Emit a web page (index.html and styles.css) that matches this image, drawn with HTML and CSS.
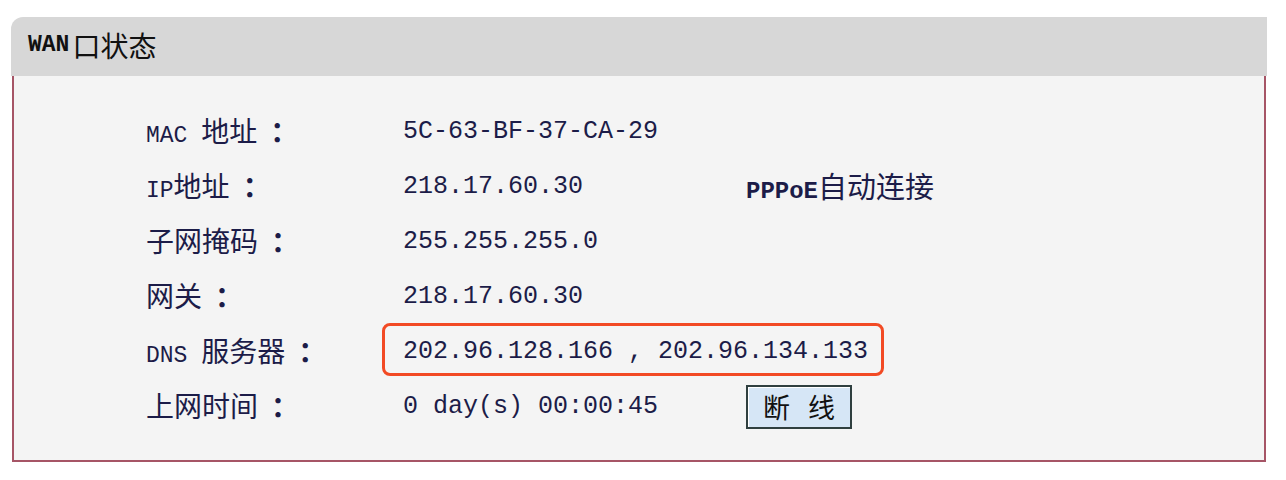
FILE: index.html
```html
<!DOCTYPE html>
<html lang="zh-CN">
<head>
<meta charset="utf-8">
<title>WAN口状态</title>
<link rel="stylesheet" href="styles.css">
</head>
<body>
<div class="panel">
  <div class="panel-head"><span class="lat">WAN</span>口状态</div>
  <div class="panel-body">
    <div class="grid">
      <div class="lbl"><span class="lat">MAC </span>地址<span class="colon">：</span></div>
      <div class="val lat">5C-63-BF-37-CA-29</div>
      <div class="extra"></div>

      <div class="lbl"><span class="lat">IP</span>地址<span class="colon">：</span></div>
      <div class="val lat">218.17.60.30</div>
      <div class="extra"><span class="lat">PPPoE</span>自动连接</div>

      <div class="lbl">子网掩码<span class="colon">：</span></div>
      <div class="val lat">255.255.255.0</div>
      <div class="extra"></div>

      <div class="lbl">网关<span class="colon">：</span></div>
      <div class="val lat">218.17.60.30</div>
      <div class="extra"></div>

      <div class="lbl"><span class="lat">DNS </span>服务器<span class="colon">：</span></div>
      <div class="val lat wide"><span class="mark">202.96.128.166 , 202.96.134.133</span></div>

      <div class="lbl">上网时间<span class="colon">：</span></div>
      <div class="val lat">0 day(s) 00:00:45</div>
      <div class="extra"><button class="btn" type="button">断 线</button></div>
    </div>
  </div>
</div>
</body>
</html>
```

FILE: styles.css
```css
html, body {
  margin: 0;
  padding: 0;
  background: #ffffff;
}

body {
  font-family: "Noto Sans CJK SC", "Liberation Mono", monospace;
  color: #1c1c48;
}

.lat {
  font-family: "Liberation Mono", "Noto Sans CJK SC", monospace;
}

.colon {
  font-weight: bold;
  padding-left: 13px;
}

.panel {
  margin: 17px 0 0 11px;
  width: 1256px;
}

.panel-head {
  height: 59px;
  box-sizing: border-box;
  background: #d7d7d7;
  border-top-left-radius: 12px;
  padding-left: 17px;
  padding-bottom: 3px;
  display: flex;
  align-items: center;
  font-size: 28px;
  color: #111111;
}

.panel-head .lat {
  font-size: 23px;
  font-weight: bold;
  margin-right: 3px;
}

.panel-body {
  background: #f4f4f4;
  border: 2px solid #a65566;
  border-top: none;
  margin-left: 1px;
  margin-right: 1px;
  padding: 26px 0 28px 0;
}

.grid {
  display: grid;
  grid-template-columns: 257px 343px 1fr;
  grid-auto-rows: 55px;
  align-items: center;
  padding-left: 132px;
  font-size: 28px;
}

.lbl {
  white-space: nowrap;
}

.lbl .lat {
  font-size: 23px;
}

.val {
  font-size: 25px;
  white-space: nowrap;
  padding-top: 3px;
}

.extra {
  font-size: 29px;
  white-space: nowrap;
}

.extra .lat {
  font-size: 24px;
  font-weight: bold;
}

.wide {
  grid-column: 2 / 4;
  padding-top: 0;
}

.mark {
  display: inline-block;
  border: 3px solid #f24a24;
  border-radius: 8px;
  padding: 11px 13px 7px 18px;
  margin-left: -21px;
  line-height: 29px;
}

.btn {
  font-family: "Noto Sans CJK SC", sans-serif;
  font-size: 27px;
  word-spacing: 12px;
  color: #111111;
  background: #d6e6f6;
  border: 2px solid #2f3f3f;
  width: 106px;
  height: 44px;
  padding: 0;
  margin-top: 4px;
  line-height: 38px;
  box-shadow: inset 1px 1px 0 #ffffff;
}
```
